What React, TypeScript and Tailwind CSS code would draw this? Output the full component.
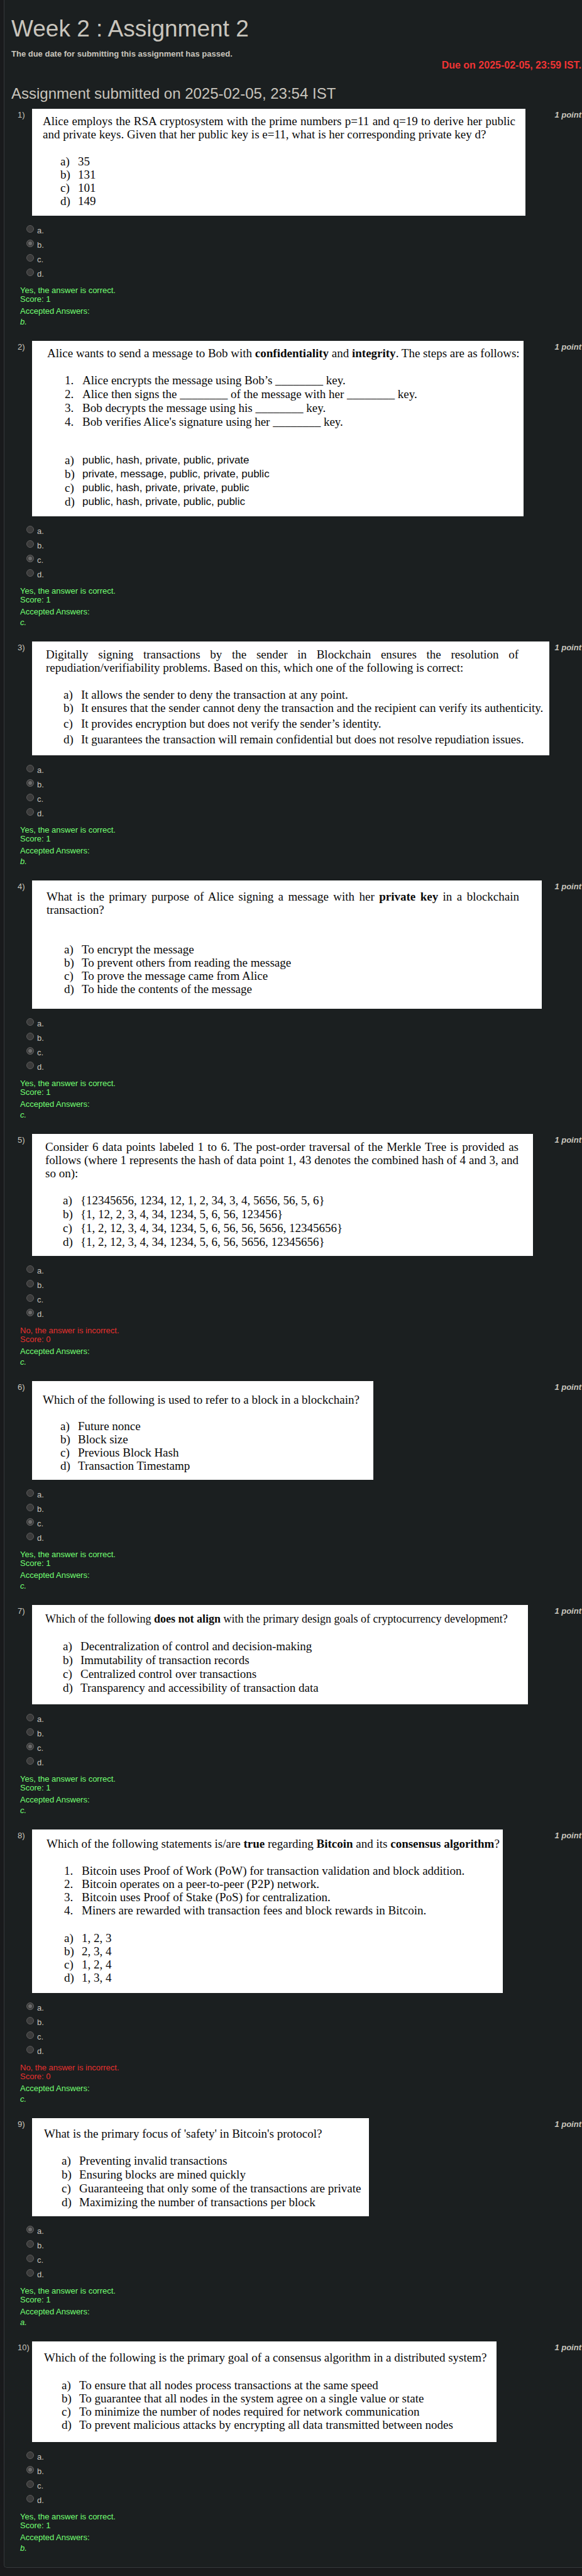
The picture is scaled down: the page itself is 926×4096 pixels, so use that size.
import type { ReactNode } from "react";

type List = {
  marker: "number" | "letter";
  items: ReactNode[];
  spacing: string;
  sans?: boolean;
  spreadLast?: boolean;
};

type Question = {
  card: string;
  prompt: ReactNode;
  lists: List[];
  chosen: string;
  accepted: string;
  correct: boolean;
};

const LETTERS = ["a", "b", "c", "d"];

const Blank = () => <>________</>;

const QUESTIONS: Question[] = [
  {
    card: "w-[785px] pt-[9px] pr-4 pb-[13px] pl-[17px]",
    prompt:
      "Alice employs the RSA cryptosystem with the prime numbers p=11 and q=19 to derive her public and private keys. Given that her public key is e=11, what is her corresponding private key d?",
    lists: [{ marker: "letter", spacing: "mt-[22px] leading-[21px]", items: ["35", "131", "101", "149"] }],
    chosen: "b",
    accepted: "b",
    correct: true,
  },
  {
    card: "w-[782px] pt-[9px] pb-3 pl-6",
    prompt: (
      <>
        Alice wants to send a message to Bob with <b>confidentiality</b> and <b>integrity</b>. The steps are as
        follows:
      </>
    ),
    lists: [
      {
        marker: "number",
        spacing: "mt-[22px] leading-[22px]",
        items: [
          <>Alice encrypts the message using Bob’s <Blank /> key.</>,
          <>Alice then signs the <Blank /> of the message with her <Blank /> key.</>,
          <>Bob decrypts the message using his <Blank /> key.</>,
          <>Bob verifies Alice's signature using her <Blank /> key.</>,
        ],
      },
      {
        marker: "letter",
        spacing: "mt-[39px] leading-[22px]",
        sans: true,
        items: [
          "public, hash, private, public, private",
          "private, message, public, private, public",
          "public, hash, private, private, public",
          "public, hash, private, public, public",
        ],
      },
    ],
    chosen: "c",
    accepted: "c",
    correct: true,
  },
  {
    card: "w-[823px] pt-[10px] pb-[15px] pl-[22px]",
    prompt: (
      <span className="block max-w-[752px]">
        Digitally signing transactions by the sender in Blockchain ensures the resolution of
        repudiation/verifiability problems. Based on this, which one of the following is correct:
      </span>
    ),
    lists: [
      {
        marker: "letter",
        spacing: "mt-[22px] leading-[21px]",
        spreadLast: true,
        items: [
          "It allows the sender to deny the transaction at any point.",
          "It ensures that the sender cannot deny the transaction and the recipient can verify its authenticity.",
          "It provides encryption but does not verify the sender’s identity.",
          "It guarantees the transaction will remain confidential but does not resolve repudiation issues.",
        ],
      },
    ],
    chosen: "b",
    accepted: "b",
    correct: true,
  },
  {
    card: "w-[811px] pt-[15px] pr-9 pb-[21px] pl-[23px]",
    prompt: (
      <>
        What is the primary purpose of Alice signing a message with her <b>private key</b> in a blockchain
        transaction?
      </>
    ),
    lists: [
      {
        marker: "letter",
        spacing: "mt-[42px] leading-[21px]",
        items: [
          "To encrypt the message",
          "To prevent others from reading the message",
          "To prove the message came from Alice",
          "To hide the contents of the message",
        ],
      },
    ],
    chosen: "c",
    accepted: "c",
    correct: true,
  },
  {
    card: "w-[797px] pt-[10px] pr-[23px] pb-[11px] pl-[21px]",
    prompt:
      "Consider 6 data points labeled 1 to 6. The post-order traversal of the Merkle Tree is provided as follows (where 1 represents the hash of data point 1, 43 denotes the combined hash of 4 and 3, and so on):",
    lists: [
      {
        marker: "letter",
        spacing: "mt-[22px] leading-[22px]",
        items: [
          "{12345656, 1234, 12, 1, 2, 34, 3, 4, 5656, 56, 5, 6}",
          "{1, 12, 2, 3, 4, 34, 1234, 5, 6, 56, 123456}",
          "{1, 2, 12, 3, 4, 34, 1234, 5, 6, 56, 56, 5656, 12345656}",
          "{1, 2, 12, 3, 4, 34, 1234, 5, 6, 56, 5656, 12345656}",
        ],
      },
    ],
    chosen: "d",
    accepted: "c",
    correct: false,
  },
  {
    card: "w-[543px] pt-[19px] pb-3 pl-[17px]",
    prompt: "Which of the following is used to refer to a block in a blockchain?",
    lists: [
      {
        marker: "letter",
        spacing: "mt-[21px] leading-[21px]",
        items: ["Future nonce", "Block size", "Previous Block Hash", "Transaction Timestamp"],
      },
    ],
    chosen: "c",
    accepted: "c",
    correct: true,
  },
  {
    card: "w-[789px] pt-3 pb-[15px] pl-[21px]",
    prompt: (
      <span className="block text-lg leading-[21px]">
        Which of the following <b>does not align</b> with the primary design goals of cryptocurrency development?
      </span>
    ),
    lists: [
      {
        marker: "letter",
        spacing: "mt-[22px] leading-[22px]",
        items: [
          "Decentralization of control and decision-making",
          "Immutability of transaction records",
          "Centralized control over transactions",
          "Transparency and accessibility of transaction data",
        ],
      },
    ],
    chosen: "c",
    accepted: "c",
    correct: true,
  },
  {
    card: "w-[749px] pt-3 pb-[14px] pl-[23px]",
    prompt: (
      <>
        Which of the following statements is/are <b>true</b> regarding <b>Bitcoin</b> and its{" "}
        <b>consensus algorithm</b>?
      </>
    ),
    lists: [
      {
        marker: "number",
        spacing: "mt-[22px] leading-[21px]",
        items: [
          "Bitcoin uses Proof of Work (PoW) for transaction validation and block addition.",
          "Bitcoin operates on a peer-to-peer (P2P) network.",
          "Bitcoin uses Proof of Stake (PoS) for centralization.",
          "Miners are rewarded with transaction fees and block rewards in Bitcoin.",
        ],
      },
      {
        marker: "letter",
        spacing: "mt-[23px] leading-[21px]",
        items: ["1, 2, 3", "2, 3, 4", "1, 2, 4", "1, 3, 4"],
      },
    ],
    chosen: "a",
    accepted: "c",
    correct: false,
  },
  {
    card: "w-[536px] pt-[14px] pb-[11px] pl-[19px]",
    prompt: "What is the primary focus of 'safety' in Bitcoin's protocol?",
    lists: [
      {
        marker: "letter",
        spacing: "mt-[22px] leading-[22px]",
        items: [
          "Preventing invalid transactions",
          "Ensuring blocks are mined quickly",
          "Guaranteeing that only some of the transactions are private",
          "Maximizing the number of transactions per block",
        ],
      },
    ],
    chosen: "a",
    accepted: "a",
    correct: true,
  },
  {
    card: "w-[739px] pt-[15px] pb-[17px] pl-[19px]",
    prompt: "Which of the following is the primary goal of a consensus algorithm in a distributed system?",
    lists: [
      {
        marker: "letter",
        spacing: "mt-[23px] leading-[21px]",
        items: [
          "To ensure that all nodes process transactions at the same speed",
          "To guarantee that all nodes in the system agree on a single value or state",
          "To minimize the number of nodes required for network communication",
          "To prevent malicious attacks by encrypting all data transmitted between nodes",
        ],
      },
    ],
    chosen: "b",
    accepted: "b",
    correct: true,
  },
];

function CardList({ list }: { list: List }) {
  return (
    <ol className={`pl-7 ${list.spacing}`}>
      {list.items.map((item, i) => (
        <li key={i} className={`flex ${list.spreadLast && i > 1 ? "mt-1" : ""}`}>
          <span className="w-7 shrink-0">{list.marker === "number" ? `${i + 1}.` : `${LETTERS[i]})`}</span>
          <span className={list.sans ? "font-['Liberation_Sans',Arial,sans-serif] text-[17px]" : ""}>{item}</span>
        </li>
      ))}
    </ol>
  );
}

function QuestionBlock({ question, number }: { question: Question; number: number }) {
  return (
    <section className="pb-[22px] pl-[10px]">
      <div className="flex items-start">
        <span className="w-[23px] shrink-0 pt-[2px] leading-4">{number})</span>
        <div
          className={`font-['Liberation_Serif','Times_New_Roman',serif] text-[19px] leading-[21px] bg-white text-[#0a0a0a] ${question.card}`}
        >
          <p className="text-justify">{question.prompt}</p>
          {question.lists.map((list, i) => (
            <CardList key={i} list={list} />
          ))}
        </div>
        <span className="ml-auto shrink-0 pt-[2px] leading-4 font-bold italic">1 point</span>
      </div>

      <fieldset className="mt-[9px] pl-[14px]">
        {LETTERS.map((letter) => (
          <label key={letter} className="flex h-[23px] w-fit items-center gap-[5px]">
            <input
              type="radio"
              name={`question-${number}`}
              disabled
              defaultChecked={letter === question.chosen}
              className="size-3 appearance-none rounded-full border border-[#5c5c5c] bg-[#3b3b3b] checked:border-[#5c5c5c] checked:bg-[#6a6a6a] checked:inset-ring-2 checked:inset-ring-[#3b3b3b]"
            />
            <span className="pt-[6px] leading-4">{letter}.</span>
          </label>
        ))}
      </fieldset>

      <div className="mt-[11px] pl-1 text-[#72ff72]">
        <p className={`leading-[14px] ${question.correct ? "" : "text-[#e8302e]"}`}>
          {question.correct ? "Yes, the answer is correct." : "No, the answer is incorrect."}
          <br />
          Score: {question.correct ? 1 : 0}
        </p>
        <p className="mt-1 leading-4">Accepted Answers:</p>
        <p className="leading-[17px] italic">{question.accepted}.</p>
      </div>
    </section>
  );
}

export default function App() {
  return (
    <div className="min-h-screen bg-[#191a1c] pb-[13px] pl-[6px] font-['Liberation_Sans',Arial,sans-serif] text-[13px] text-[#c9c5bd]">
      <main className="rounded-bl-[5px] border-b border-l border-[#35393b] bg-[#1b1f20] pt-[26px] pr-px pb-0 pl-[11px]">
        <h1 className="text-[37px] leading-10">Week 2 : Assignment 2</h1>
        <p className="mt-3 leading-4 font-bold">The due date for submitting this assignment has passed.</p>
        <p className="text-right text-base leading-5 font-bold text-[#f03434]">Due on 2025-02-05, 23:59 IST.</p>
        <h2 className="mt-[21px] mb-[10px] text-2xl leading-7">Assignment submitted on 2025-02-05, 23:54 IST</h2>
        {QUESTIONS.map((question, i) => (
          <QuestionBlock key={i} question={question} number={i + 1} />
        ))}
      </main>
    </div>
  );
}
